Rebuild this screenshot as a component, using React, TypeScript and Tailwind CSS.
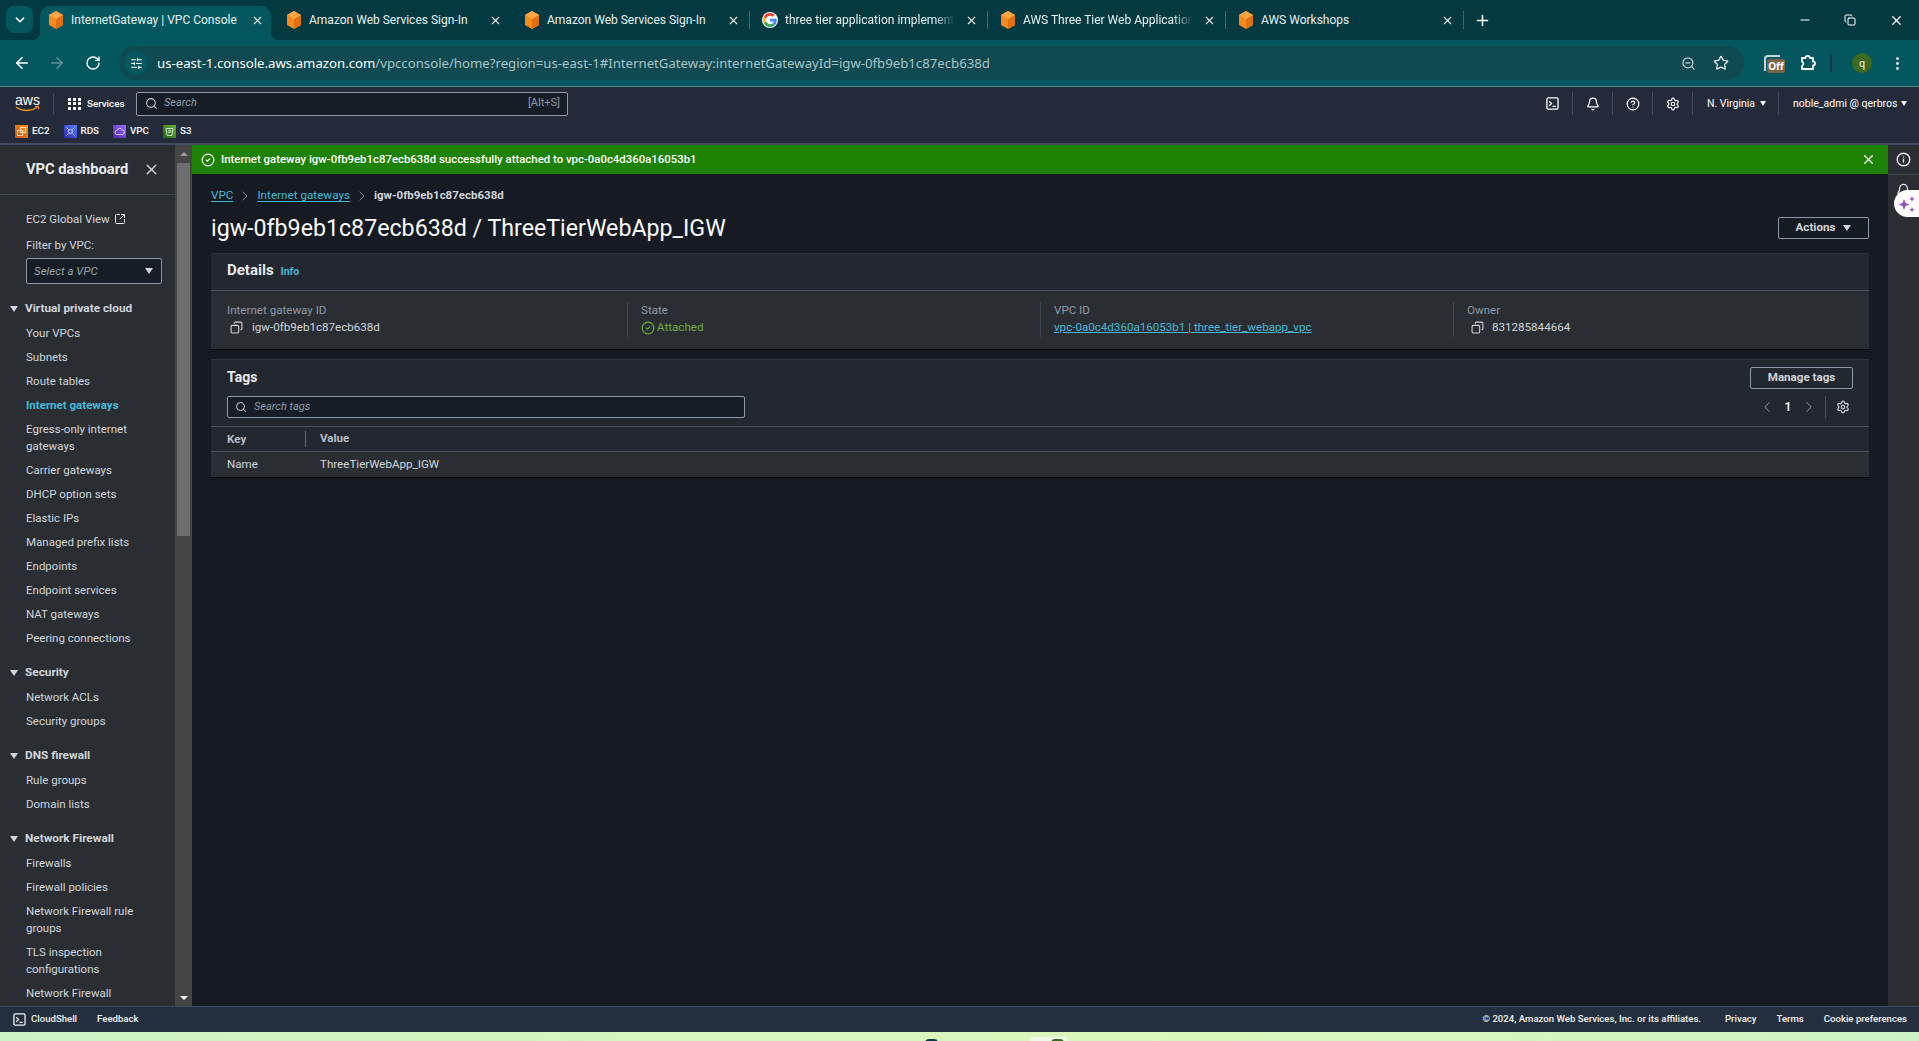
import { ArrowLeft, ArrowRight, ChevronLeft, ChevronRight, ChevronDown, Copy, Minus, MoreVertical, Plus, RotateCw, Search, Settings, Star, X, ZoomOut, Bell, CircleHelp, Info, SquareArrowOutUpRight, SlidersHorizontal, CircleCheck } from "lucide-react"

const tabs = [
  { title: "InternetGateway | VPC Console", icon: "aws", active: true },
  { title: "Amazon Web Services Sign-In", icon: "aws" },
  { title: "Amazon Web Services Sign-In", icon: "aws", sep: true },
  { title: "three tier application implementation", icon: "google", sep: true },
  { title: "AWS Three Tier Web Application", icon: "aws", sep: true },
  { title: "AWS Workshops", icon: "aws", sep: true },
]

type NavItem = { label: string; active?: boolean }
const navGroups: { title: string; items: NavItem[] }[] = [
  {
    title: "Virtual private cloud",
    items: [
      { label: "Your VPCs" },
      { label: "Subnets" },
      { label: "Route tables" },
      { label: "Internet gateways", active: true },
      { label: "Egress-only internet gateways" },
      { label: "Carrier gateways" },
      { label: "DHCP option sets" },
      { label: "Elastic IPs" },
      { label: "Managed prefix lists" },
      { label: "Endpoints" },
      { label: "Endpoint services" },
      { label: "NAT gateways" },
      { label: "Peering connections" },
    ],
  },
  { title: "Security", items: [{ label: "Network ACLs" }, { label: "Security groups" }] },
  { title: "DNS firewall", items: [{ label: "Rule groups" }, { label: "Domain lists" }] },
  {
    title: "Network Firewall",
    items: [
      { label: "Firewalls" },
      { label: "Firewall policies" },
      { label: "Network Firewall rule groups" },
      { label: "TLS inspection configurations" },
      { label: "Network Firewall" },
    ],
  },
]

const shortcuts = [
  { label: "EC2", bg: "bg-[linear-gradient(45deg,#c8511b,#ff9900)]", gap: "mr-[14px]", kind: "ec2" },
  { label: "RDS", bg: "bg-[linear-gradient(45deg,#2e27ad,#527fff)]", gap: "mr-[14px]", kind: "rds" },
  { label: "VPC", bg: "bg-[linear-gradient(45deg,#4d27a8,#a166ff)]", gap: "mr-[14px]", kind: "vpc" },
  { label: "S3", bg: "bg-[linear-gradient(45deg,#1b660f,#6cae3e)]", gap: "", kind: "s3" },
]

function AwsFavicon() {
  return (
    <svg width="16" height="18" viewBox="0 0 16 18" className="shrink-0">
      <polygon points="8,0 15,4 15,14 8,18 1,14 1,4" fill="#f58a1f" />
      <polygon points="8,8 15,4 15,14 8,18" fill="#e2700f" />
      <polygon points="8,0 15,4 8,8 1,4" fill="#fba644" />
    </svg>
  )
}

function GoogleFavicon() {
  return (
    <div className="w-4 h-4 rounded-full bg-white flex items-center justify-center shrink-0">
      <svg width="14" height="14" viewBox="0 0 48 48">
        <path fill="#EA4335" d="M24 9.5c3.5 0 6.700 1.200 9.200 3.600l6.900-6.900C35.900 2.400 30.500 0 24 0 14.600 0 6.500 5.400 2.600 13.200l8 6.200C12.500 13.600 17.800 9.500 24 9.500z" />
        <path fill="#4285F4" d="M47 24.500c0-1.600-.1-3.100-.4-4.500H24v9h12.900c-.6 3-2.200 5.500-4.700 7.200l7.700 6c4.500-4.200 7.100-10.300 7.100-17.700z" />
        <path fill="#FBBC05" d="M10.600 28.600c-.5-1.400-.8-3-.8-4.600s.3-3.200.8-4.600l-8-6.200C.9 16.500 0 20.100 0 24s.9 7.500 2.600 10.800l8-6.200z" />
        <path fill="#34A853" d="M24 48c6.500 0 11.900-2.100 15.900-5.800l-7.700-6c-2.100 1.400-4.900 2.300-8.200 2.300-6.200 0-11.500-4.100-13.400-9.900l-8 6.200C6.500 42.600 14.600 48 24 48z" />
      </svg>
    </div>
  )
}

function BrowserTab({ title, icon, active, sep }: { title: string; icon: string; active?: boolean; sep?: boolean }) {
  return (
    <div className={`h-[34px] flex items-center pl-2 pb-[6px] relative ${active ? "w-[231px] mr-[7px] bg-[#04575f] rounded-t-[10px]" : "w-[238px]"}`}>
      {active && (
        <>
          <span className="absolute -left-[8px] bottom-0 w-[8px] h-[8px] bg-[radial-gradient(circle_at_0_0,transparent_8px,#04575f_8px)]" />
          <span className="absolute -right-[8px] bottom-0 w-[8px] h-[8px] bg-[radial-gradient(circle_at_100%_0,transparent_8px,#04575f_8px)]" />
        </>
      )}
      {icon === "aws" ? <AwsFavicon /> : <GoogleFavicon />}
      <span className={`ml-[7px] w-[170px] text-[12px] leading-[16px] whitespace-nowrap overflow-hidden text-[#e6f2f2] ${title === "AWS Three Tier Web Application" || title.startsWith("three") ? "[mask-image:linear-gradient(to_right,black_88%,transparent)]" : ""}`}>{title}</span>
      <span className="w-[14px] ml-[9px] flex justify-center">
        <X size={13} className="text-[#e6f2f2]" />
      </span>
      {!active && <span className={`ml-[9px] w-px h-[18px] ${sep ? "bg-[#2b6d74]" : ""}`} />}
    </div>
  )
}

function ServiceIcon({ bg, kind }: { bg: string; kind: string }) {
  return (
    <span className={`${bg} w-[13px] h-[13px] flex items-center justify-center`}>
      <svg width="11" height="11" viewBox="0 0 11 11" fill="none" stroke="#fff" strokeOpacity="0.8" strokeWidth="0.9">
        {kind === "ec2" && (
          <>
            <rect x="4.500" y="1.500" width="5" height="5" />
            <rect x="1.500" y="4.500" width="5" height="5" />
          </>
        )}
        {kind === "rds" && (
          <>
            <circle cx="5.500" cy="5.500" r="2" />
            <path d="M1.500 1.500 3.500 3.500M9.500 1.500l-2 2M1.500 9.500l2-2M9.500 9.500l-2-2" />
          </>
        )}
        {kind === "vpc" && <path d="M3 8.500a2 2 0 0 1 0-4 2.800 2.800 0 0 1 5.200-.6A2.300 2.300 0 0 1 8 8.500z" />}
        {kind === "s3" && (
          <>
            <path d="M2 2.500h7L8 9.500H3z" />
            <circle cx="5.500" cy="5.500" r="1.200" />
          </>
        )}
      </svg>
    </span>
  )
}

function HeaderIcon({ children }: { children: React.ReactNode }) {
  return <div className="w-[40px] h-[23px] flex items-center justify-center border-r border-[#414d5c] text-white">{children}</div>
}

function ShellIcon({ size = 13 }: { size?: number }) {
  return (
    <svg width={size} height={size} viewBox="0 0 14 14" fill="none" stroke="currentColor" strokeWidth="1.400">
      <rect x="1" y="1" width="12" height="12" rx="1.500" />
      <path d="M3.500 4.500 6 7l-2.500 2.500M7 10h3.500" />
    </svg>
  )
}

function GearIcon({ size = 14 }: { size?: number }) {
  return <Settings size={size} strokeWidth={2} />
}

function Caret({ color = "border-t-[#d1d5db]" }: { color?: string }) {
  return <span className={`w-0 h-0 border-l-[4px] border-r-[4px] border-t-[6px] border-l-transparent border-r-transparent ${color}`} />
}

function Sidebar() {
  return (
    <aside className="w-[192px] h-full flex shrink-0 overflow-hidden">
      <div className="w-[175px] h-full bg-[#2a2e33] overflow-hidden">
        <div className="h-[50px] pl-[26px] pr-[15px] flex items-center justify-between border-b border-[#414750]">
          <span className="text-[14.700px] font-bold text-[#e9ebed]">VPC dashboard</span>
          <X size={17} className="text-[#d1d5db]" />
        </div>
        <div className="pl-[26px] pt-[15px] text-[11.500px] leading-[18px] text-[#d1d5db]">
          <div className="flex items-center gap-[4px] h-[18px]">
            EC2 Global View
            <SquareArrowOutUpRight size={12} className="text-[#e9ebed]" />
          </div>
          <div className="mt-[8px] h-[18px]">Filter by VPC:</div>
          <div className="mt-[4px] w-[136px] h-[26px] bg-[#161d26] border border-[#8d99a8] rounded-[2px] flex items-center justify-between pl-[7px] pr-[8px]">
            <span className="italic text-[#95a5a6]">Select a VPC</span>
            <Caret />
          </div>
        </div>
        <nav className="mt-[16px] text-[11.500px]">
          {navGroups.map((group) => (
            <div key={group.title} className="mb-[17px]">
              <div className="flex items-center h-[18px] pl-[10px]">
                <Caret />
                <span className="ml-[7px] text-[11.800px] font-bold text-[#d1d5db]">{group.title}</span>
              </div>
              <ul className="mt-[7px] pl-[26px] pr-[12px] flex flex-col gap-[7px]">
                {group.items.map((item) => (
                  <li key={item.label} className={`leading-[17px] ${item.active ? "font-bold text-[#44b9d6]" : "text-[#d1d5db]"}`}>
                    {item.label}
                  </li>
                ))}
              </ul>
            </div>
          ))}
        </nav>
      </div>
      <div className="w-[17px] h-full bg-[#454545] flex flex-col items-center">
        <div className="h-[18px] flex items-center justify-center">
          <span className="w-0 h-0 border-l-[4px] border-r-[4px] border-b-[4px] border-l-transparent border-r-transparent border-b-[#9a9a9a]" />
        </div>
        <div className="w-[13px] h-[373px] bg-[#6e6e6e]" />
        <div className="flex-1" />
        <div className="h-[17px] flex items-center justify-center">
          <span className="w-0 h-0 border-l-[4px] border-r-[4px] border-t-[4px] border-l-transparent border-r-transparent border-t-white" />
        </div>
      </div>
    </aside>
  )
}

function DetailCell({ label, first, children }: { label: string; first?: boolean; children: React.ReactNode }) {
  return (
    <div className={`h-[35px] ${first ? "pl-[16px]" : "pl-[13px] border-l border-[#414750]"}`}>
      <div className="text-[11.600px] leading-[17px] text-[#8d99a8]">{label}</div>
      <div className="text-[11.600px] leading-[17px] text-[#d1d5db]">{children}</div>
    </div>
  )
}

function OutlineButton({ children, className }: { children: React.ReactNode; className: string }) {
  return (
    <button className={`h-[22px] border border-[#8d99a8] rounded-[2px] text-[11.600px] font-bold text-[#d1d5db] flex items-center justify-center ${className}`}>
      {children}
    </button>
  )
}

export default function App() {
  return (
    <div className="w-[1919px] h-[1041px] overflow-hidden flex flex-col bg-[#161d26] font-['Roboto',sans-serif] relative">
      {/* browser tab strip */}
      <div className="h-[40px] bg-[#033a42] flex items-end shrink-0 text-white">
        <div className="w-[27px] h-[27px] ml-[6px] mb-[7px] mr-[7px] rounded-[8px] bg-[#04575f] flex items-center justify-center">
          <ChevronDown size={14} strokeWidth={3} />
        </div>
        {tabs.map((t, i) => (
          <BrowserTab key={i} {...t} />
        ))}
        <div className="h-[34px] pb-[6px] flex items-center ml-[6px]">
          <Plus size={17} strokeWidth={2.200} />
        </div>
        <div className="flex-1" />
        <div className="h-[40px] flex items-center">
          <Minus size={14} className="mr-[32px]" />
          <Copy size={12} className="mr-[33px]" />
          <X size={15} className="mr-[15px]" />
        </div>
      </div>

      {/* address bar */}
      <div className="h-[46px] bg-[#04575f] flex items-center text-white shrink-0 font-['Noto_Sans',sans-serif]">
        <ArrowLeft size={18} className="ml-[13px]" />
        <ArrowRight size={18} className="ml-[17px] text-[#5e9297]" />
        <RotateCw size={16} className="ml-[19px]" />
        <div className="ml-[18px] w-[1625px] h-[34px] rounded-full bg-[#0f4a52] flex items-center pl-[5px]">
          <span className="w-[24px] h-[24px] rounded-full bg-[#04575f] flex items-center justify-center">
            <SlidersHorizontal size={13} />
          </span>
          <span className="ml-[9px] pt-px text-[13.200px] whitespace-nowrap">
            us-east-1.console.aws.amazon.com<span className="text-[#a9c4c7]">/vpcconsole/home?region=us-east-1#InternetGateway:internetGatewayId=igw-0fb9eb1c87ecb638d</span>
          </span>
          <div className="flex-1" />
          <ZoomOut size={15} className="text-[#c7d6d8]" />
          <Star size={16} className="ml-[17px] mr-[15px] text-[#e2eaeb]" />
        </div>
        <div className="relative ml-[20px] w-[16px] h-[16px] border-t-2 border-l-2 border-[#c7d6d8] rounded-tl-[4px]">
          <span className="absolute left-[1px] top-[2px] w-[18px] h-[14px] bg-[#7b6548] rounded-[2px] text-[10px] leading-[14px] font-bold text-center">Off</span>
        </div>
        <svg width="18" height="18" viewBox="0 0 18 18" fill="none" stroke="#fff" strokeWidth="1.800" strokeLinejoin="round" className="ml-[19px]">
          <path d="M3 4h3.500a2.200 2.200 0 0 1 4.400 0H14v3.500a2 2 0 0 1 0 4V15H3v-3a2.500 2.500 0 0 0 0-4.500z" />
        </svg>
        <span className="ml-[13px] w-[2px] h-[18px] bg-[#033a42]" />
        <span className="ml-[20px] w-[20px] h-[20px] rounded-full bg-[#3c6a1f] text-[10px] flex items-center justify-center">q</span>
        <MoreVertical size={17} className="ml-[17px]" />
      </div>

      {/* aws console header */}
      <div className="h-[59px] bg-[#232b3b] border-t border-[#4d8c90] border-b-2 border-b-[#414d5c] shrink-0 text-white">
        <div className="h-[33px] flex items-center">
          <div className="ml-[15px] w-[25px] flex flex-col items-center leading-none">
            <span className="text-[14px] leading-[11px] font-['Liberation_Sans',sans-serif]">aws</span>
            <svg width="25" height="6" viewBox="0 0 25 6" fill="none">
              <path d="M1 1c6 4.500 15 4.500 21 .5" stroke="#ff9900" strokeWidth="1.500" />
              <path d="M20 .5h3.500v3" stroke="#ff9900" strokeWidth="1" />
            </svg>
          </div>
          <span className="ml-[13px] w-px h-[20px] bg-[#414d5c]" />
          <div className="ml-[14px] grid grid-cols-3 gap-[1.500px] w-[13px]">
            {Array.from({ length: 9 }).map((_, i) => (
              <span key={i} className="w-[3px] h-[3px] bg-white" />
            ))}
          </div>
          <span className="ml-[6px] w-[36px] text-[9.800px] leading-none font-medium whitespace-nowrap">Services</span>
          <div className="ml-[13px] w-[432px] h-[24px] bg-[#161d26] border border-[#8d99a8] rounded-[2px] flex items-center pl-[8px] pr-[7px]">
            <Search size={13} className="text-[#d1d5db]" />
            <span className="ml-[6px] italic text-[11px] text-[#8d99a8]">Search</span>
            <div className="flex-1" />
            <span className="text-[11px] text-[#8d99a8]">[Alt+S]</span>
          </div>
          <div className="flex-1" />
          <HeaderIcon><ShellIcon /></HeaderIcon>
          <HeaderIcon><Bell size={14} strokeWidth={2} /></HeaderIcon>
          <HeaderIcon><CircleHelp size={14} strokeWidth={2} /></HeaderIcon>
          <HeaderIcon><GearIcon /></HeaderIcon>
          <div className="h-[23px] w-[86px] pl-[14px] flex items-center border-r border-[#414d5c] text-[10.500px]">
            N. Virginia
            <span className="ml-[5px] w-0 h-0 border-l-[3.500px] border-r-[3.500px] border-t-[5px] border-l-transparent border-r-transparent border-t-white" />
          </div>
          <div className="pl-[14px] w-[140px] flex items-center text-[10.500px] whitespace-nowrap">
            noble_admi @ qerbros
            <span className="ml-[4px] w-0 h-0 border-l-[3.500px] border-r-[3.500px] border-t-[5px] border-l-transparent border-r-transparent border-t-white" />
          </div>
        </div>
        <div className="h-[24px] pl-[15px] pb-[2px] flex items-center">
          {shortcuts.map((s) => (
            <div key={s.label} className={`flex items-center gap-[4px] text-[9.800px] font-medium ${s.gap}`}>
              <ServiceIcon bg={s.bg} kind={s.kind} />
              <span>{s.label}</span>
            </div>
          ))}
        </div>
      </div>

      {/* page body */}
      <div className="flex-1 min-h-0 flex">
        <Sidebar />
        <main className="flex-1 min-w-0 bg-[#161a23]">
          <div className="h-[29px] bg-[#1d8102] flex items-center pl-[9px] pr-[12px] text-white">
            <CircleCheck size={14} />
            <span className="ml-[6px] text-[11.400px] font-medium">Internet gateway igw-0fb9eb1c87ecb638d successfully attached to vpc-0a0c4d360a16053b1</span>
            <div className="flex-1" />
            <X size={15} />
          </div>
          <div className="px-[19px]">
            <div className="mt-[13px] h-[18px] flex items-center text-[11.700px]">
              <span className="text-[#44b9d6] underline underline-offset-2">VPC</span>
              <ChevronRight size={16} className="mx-[4px] text-[#8d99a8]" strokeWidth={1.300} />
              <span className="text-[#44b9d6] underline underline-offset-2">Internet gateways</span>
              <ChevronRight size={16} className="mx-[4px] text-[#8d99a8]" strokeWidth={1.300} />
              <span className="text-[11.500px] font-bold text-[#d1d5db]">igw-0fb9eb1c87ecb638d</span>
            </div>
            <div className="mt-[5px] h-[36px] flex items-center justify-between">
              <h1 className="text-[23.200px] leading-[30px] text-[#fbfbfb]">igw-0fb9eb1c87ecb638d / ThreeTierWebApp_IGW</h1>
              <OutlineButton className="w-[91px] gap-[8px]">
                Actions
                <Caret />
              </OutlineButton>
            </div>

            {/* details card */}
            <section className="mt-[7px] h-[97px] bg-[#2a2e33] border-b border-b-black border-t border-t-[#31353b]">
              <div className="h-[37px] bg-[#23272f] border-b border-[#4b5058] pl-[16px] pb-[3px] flex items-center">
                <span className="text-[15px] font-bold text-[#e9ebed]">Details</span>
                <span className="ml-[7px] text-[10.500px] font-bold text-[#44b9d6] mt-[2px]">Info</span>
              </div>
              <div className="mt-[11px] grid grid-cols-[416px_413px_413px_1fr]">
                <DetailCell label="Internet gateway ID" first>
                  <span className="flex items-center">
                    <Copy size={13} className="ml-[3px] mr-[9px] -scale-x-100" />
                    igw-0fb9eb1c87ecb638d
                  </span>
                </DetailCell>
                <DetailCell label="State">
                  <span className="flex items-center text-[#6aaf35]">
                    <CircleCheck size={14} className="mr-[2px]" />
                    Attached
                  </span>
                </DetailCell>
                <DetailCell label="VPC ID">
                  <span className="text-[#44b9d6] underline">vpc-0a0c4d360a16053b1 | three_tier_webapp_vpc</span>
                </DetailCell>
                <DetailCell label="Owner">
                  <span className="flex items-center">
                    <Copy size={13} className="ml-[4px] mr-[8px] -scale-x-100" />
                    831285844664
                  </span>
                </DetailCell>
              </div>
            </section>

            {/* tags card */}
            <section className="mt-[9px] h-[119px] bg-[#23272f] border-b border-b-black border-t border-t-[#31353b]">
              <div className="h-[67px] border-b border-[#4b5058] pl-[16px] pr-[16px] flex justify-between">
                <div className="pt-[8px]">
                  <div className="text-[14px] font-bold leading-[18px] text-[#e9ebed]">Tags</div>
                  <div className="mt-[10px] w-[518px] h-[22px] bg-[#161d26] border border-[#8d99a8] rounded-[2px] flex items-center pl-[7px]">
                    <Search size={12} className="text-[#d1d5db]" />
                    <span className="ml-[7px] text-[11px] italic text-[#8d99a8]">Search tags</span>
                  </div>
                </div>
                <div className="pt-[7px] flex flex-col items-end">
                  <OutlineButton className="w-[103px]">Manage tags</OutlineButton>
                  <div className="mt-[7px] mr-[3px] h-[22px] flex items-center text-[#8d99a8]">
                    <ChevronLeft size={18} strokeWidth={1.300} />
                    <span className="w-[24px] text-center text-[12px] font-bold text-[#e9ebed]">1</span>
                    <ChevronRight size={18} strokeWidth={1.300} />
                    <span className="ml-[7px] w-px h-[22px] bg-[#4b5058]" />
                    <span className="ml-[10px] text-[#d1d5db]"><GearIcon /></span>
                  </div>
                </div>
              </div>
              <div className="h-[25px] border-b border-[#4b5058] pl-[16px] flex items-center text-[11.600px] font-bold text-[#b6bec9]">
                <span className="w-[79px] h-[16px] leading-[16px] border-r border-[#5f6b7a]">Key</span>
                <span className="ml-[14px]">Value</span>
              </div>
              <div className="h-[25px] bg-[#2a2e33] pl-[16px] flex items-center text-[11.600px] text-[#d1d5db]">
                <span className="w-[79px]">Name</span>
                <span className="ml-[14px]">ThreeTierWebApp_IGW</span>
              </div>
            </section>
          </div>
        </main>
        <div className="w-[31px] shrink-0 bg-[#2a2e33] flex flex-col items-center text-[#e9ebed]">
          <div className="h-[30px] w-full flex items-center justify-center border-b border-[#414750]">
            <Info size={15} strokeWidth={2.200} />
          </div>
          <Bell size={15} className="mt-[8px]" />
        </div>
      </div>

      {/* console footer */}
      <div className="h-[26px] bg-[#232f3e] border-t border-[#414d5c] flex items-center pl-[13px] pr-[12px] text-[9.600px] font-medium text-[#f2f3f3] shrink-0">
        <ShellIcon />
        <span className="ml-[5px]">CloudShell</span>
        <span className="ml-[20px]">Feedback</span>
        <div className="flex-1" />
        <span>© 2024, Amazon Web Services, Inc. or its affiliates.</span>
        <span className="ml-[24px]">Privacy</span>
        <span className="ml-[20px]">Terms</span>
        <span className="ml-[20px]">Cookie preferences</span>
      </div>

      {/* desktop wallpaper showing under the window */}
      <div className="h-[9px] shrink-0 bg-[linear-gradient(90deg,#cdf3c5,#dcf7bb_60%,#cdf3c5)]" />

      {/* assistant pill over the side rail */}
      <div className="absolute left-[1894px] top-[190px] w-[25px] h-[27px] bg-white rounded-l-full flex items-center justify-center">
        <svg width="18" height="18" viewBox="0 0 18 18" fill="#8c4fbf">
          <path d="M6 4l1.500 4 4 1.500-4 1.500L6 15l-1.500-4-4-1.500 4-1.500z" />
          <path d="M14 1l.8 2.200L17 4l-2.200.8L14 7l-.8-2.200L11 4l2.200-.8zM14 12l.8 2 2 .8-2 .8-.8 2-.8-2-2-.8 2-.8z" />
        </svg>
      </div>
      <span className="absolute left-[925px] top-[1039px] w-[13px] h-[4px] rounded-t-full bg-[#0f3a4a]" />
      <span className="absolute left-[1030px] top-[1037px] w-[38px] h-[6px] rounded-t-[4px] bg-[#eef9e8]" />
      <span className="absolute left-[1051px] top-[1039px] w-[13px] h-[4px] rounded-t-full bg-[#3c6a1f]" />
    </div>
  )
}
